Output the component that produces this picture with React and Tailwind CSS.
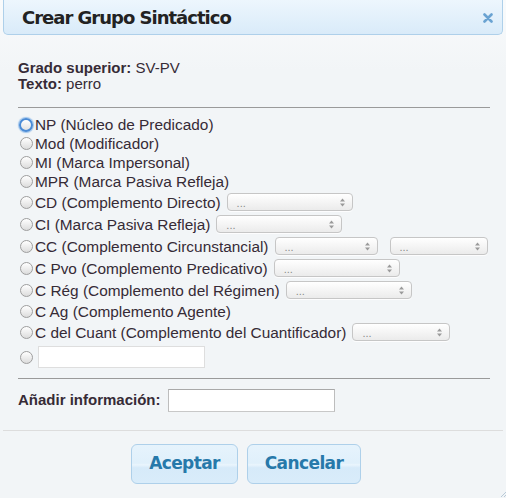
import React from "react";

function Radio({ focus }) {
  if (focus) {
    return (
      <span className="ml-[19px] mr-[2px] box-border inline-block h-[14px] w-[14px] shrink-0 rounded-full border-[2px] border-[#4a8bd6] bg-[linear-gradient(180deg,#ffffff,#e2e2e2)] shadow-[0_0_1px_1px_#9cc3ec]" />
    );
  }
  return (
    <span className="ml-[20px] mr-[2px] box-border inline-block h-[13px] w-[13px] shrink-0 rounded-full border border-[#9e9e9e] bg-[linear-gradient(180deg,#ffffff,#dcdcdc)]" />
  );
}

function Sel({ cls }) {
  return (
    <div className={"relative box-border flex h-[18px] shrink-0 items-center rounded-[4px] border border-[#c6c6c6] bg-[linear-gradient(180deg,#ffffff,#ebebeb)] shadow-[0_1px_0_rgba(255,255,255,0.8)] " + cls}>
      <span className="pl-[9px] pt-[2px] text-[11px] leading-none text-[#8a8a8a]">...</span>
      <svg className="absolute right-[7px] top-[4px]" width="5" height="9" viewBox="0 0 5 9">
        <polygon points="0,3.5 2.5,0.5 5,3.5" fill="#9a9a9a" />
        <polygon points="0,5.5 2.5,8.5 5,5.5" fill="#9a9a9a" />
      </svg>
    </div>
  );
}

const rows = [
  { label: "NP (Núcleo de Predicado)", focus: true, h: "h-[19px]" },
  { label: "Mod (Modificador)", h: "h-[19px]" },
  { label: "MI (Marca Impersonal)", h: "h-[19px]" },
  { label: "MPR (Marca Pasiva Refleja)", h: "h-[19px]" },
  { label: "CD (Complemento Directo)", h: "h-[22px]", sels: ["ml-[6px] w-[126px]"] },
  { label: "CI (Marca Pasiva Refleja)", h: "h-[22px]", sels: ["ml-[6px] w-[126px]"] },
  { label: "CC (Complemento Circunstancial)", h: "h-[22px]", sels: ["ml-[6px] w-[103px]", "ml-[12px] w-[98px]"] },
  { label: "C Pvo (Complemento Predicativo)", h: "h-[22px]", sels: ["ml-[6px] w-[126px]"] },
  { label: "C Rég (Complemento del Régimen)", h: "h-[22px]", sels: ["ml-[6px] w-[126px]"] },
  { label: "C Ag (Complemento Agente)", h: "h-[20px]" },
  { label: "C del Cuant (Complemento del Cuantificador)", h: "h-[22px]", sels: ["ml-[6px] w-[98px]"] },
];

export default function App() {
  return (
    <div className="relative h-[498px] w-[506px] overflow-hidden bg-[linear-gradient(180deg,#f9fbfc_0px,#f2f5f7_70px)] font-['Liberation_Sans',Arial,sans-serif] text-[#362b36]">
      {/* Title bar */}
      <div className="mx-[3px] flex h-[35px] items-center justify-between rounded-b-[5px] border border-t-0 border-[#aed0ea] bg-[linear-gradient(180deg,#edf6fd,#d9ebf9)] pl-[18px] pr-[9px]">
        <span className="font-['DejaVu_Sans',sans-serif] text-[18px] font-bold tracking-[-1px] text-[#222222]">
          Crear Grupo Sintáctico
        </span>
        <svg width="10" height="10" viewBox="0 0 10 10" className="mt-[1px]">
          <path d="M1.5 1.5 L8.5 8.5 M8.5 1.5 L1.5 8.5" stroke="#6aa3d2" strokeWidth="2.6" strokeLinecap="round" />
        </svg>
      </div>

      {/* Info */}
      <div className="mt-[25px] pl-[18px] text-[15px] leading-[16px]">
        <div>
          <b>Grado superior:</b> SV-PV
        </div>
        <div>
          <b>Texto:</b> perro
        </div>
      </div>

      <div className="ml-[18px] mr-[16px] mt-[15px] h-px bg-[#9a9a9a]" />

      {/* Radios */}
      <div className="mt-[7px] text-[15.4px] leading-[19px]">
        {rows.map((r, i) => (
          <div key={i} className={"flex items-center " + r.h}>
            <Radio focus={r.focus} />
            <span className="whitespace-nowrap">{r.label}</span>
            {r.sels && r.sels.map((s, j) => <Sel key={j} cls={s} />)}
          </div>
        ))}
        <div className="mt-[3px] flex h-[22px] items-center">
          <Radio />
          <div className="ml-[3px] box-border h-[22px] w-[167px] border border-[#dedede] bg-white" />
        </div>
      </div>

      <div className="ml-[18px] mr-[16px] mt-[10px] h-px bg-[#9a9a9a]" />

      {/* Añadir */}
      <div className="mt-[10px] flex h-[23px] items-center pl-[18px] text-[15px]">
        <b className="whitespace-nowrap">Añadir información:</b>
        <div className="ml-[7px] box-border h-[23px] w-[167px] border border-[#a9a9a9] border-l-[#bdbdbd] border-r-[#bdbdbd] border-b-[#c8c8c8] bg-white" />
      </div>

      {/* Footer */}
      <div className="mx-[3px] mt-[18px] border-t border-[#dddddd] pl-[128px] pt-[13px]">
        <div className="flex gap-[9px]">
          <button className="box-border flex h-[40px] w-[107px] items-center justify-center rounded-[6px] border border-[#aed0ea] bg-[linear-gradient(180deg,#e6f3fc_0%,#e0f0fb_48%,#eaf5fd_52%,#d6eaf9_60%,#d9ecfa_100%)] font-['DejaVu_Sans',sans-serif] text-[17px] font-bold tracking-[-0.6px] text-[#2779aa]">
            Aceptar
          </button>
          <button className="box-border flex h-[40px] w-[114px] items-center justify-center rounded-[6px] border border-[#aed0ea] bg-[linear-gradient(180deg,#e6f3fc_0%,#e0f0fb_48%,#eaf5fd_52%,#d6eaf9_60%,#d9ecfa_100%)] font-['DejaVu_Sans',sans-serif] text-[17px] font-bold tracking-[-0.6px] text-[#2779aa]">
            Cancelar
          </button>
        </div>
      </div>

      {/* resize handle */}
      <svg className="absolute bottom-[1px] right-[0px]" width="8" height="8" viewBox="0 0 8 8">
        <path d="M8 3 L3 8 M8 6 L6 8" stroke="#b9cad8" strokeWidth="1" />
      </svg>
    </div>
  );
}
